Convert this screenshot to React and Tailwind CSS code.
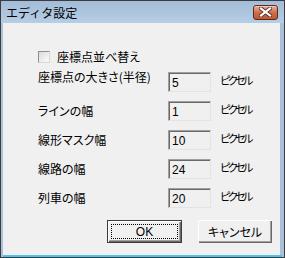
const rows = [
  { label: '座標点の大きさ(半径)', value: '5', high: true },
  { label: 'ラインの幅', value: '1' },
  { label: '線形マスク幅', value: '10' },
  { label: '線路の幅', value: '24' },
  { label: '列車の幅', value: '20' },
];

const CloseButton = () => (
  <div className="w-[25px] h-[15px] rounded-[3px] border border-[#5a2c20] bg-gradient-to-b from-[#e9b09b] via-[#cf6f4b] to-[#c0582f] flex items-center justify-center shadow-[inset_0_1px_0_#f3cbbb]">
    <svg width="13" height="10" viewBox="0 0 13 10">
      <path d="M2 1.5 L11 8.5 M11 1.5 L2 8.5" stroke="#5b3226" strokeWidth="4" strokeLinecap="square" />
      <path d="M2 1.5 L11 8.5 M11 1.5 L2 8.5" stroke="#ffffff" strokeWidth="2.2" strokeLinecap="square" />
    </svg>
  </div>
);

const App = () => {
  return (
    <div className="w-[285px] h-[258px] flex flex-col border border-[#3c3c3c] bg-[#a9c2dc] font-['Noto_Sans_CJK_JP',sans-serif] text-black overflow-hidden">
      {/* title bar */}
      <div className="h-[22px] flex items-center justify-between pl-[5px] pr-[6px] bg-gradient-to-b from-[#a3bcd7] to-[#b6cde6]">
        <span className="text-[12px] leading-[14px] mt-[1px]">エディタ設定</span>
        <CloseButton />
      </div>

      {/* client area */}
      <div className="flex-1 ml-[2px] mr-[4px] bg-[#f0f0f0] flex flex-col pt-[27px] pl-[35px] text-[12px] leading-[14px] [font-feature-settings:'palt']">
        <div className="h-[13px] flex items-center">
          <div className="w-[12px] h-[12px] border border-t-[#8e8f8f] border-l-[#8e8f8f] border-b-[#d8d8d8] border-r-[#d8d8d8] bg-gradient-to-br from-[#dcdcdc] to-[#fafafa]"></div>
          <span className="ml-[7px]">座標点並べ替え</span>
        </div>

        <div className="mt-[9px] flex flex-col gap-[9px]">
          {rows.map((r) => (
            <div key={r.label} className="h-[20px] flex items-center">
              <span className={`w-[130px] ${r.high ? 'mb-[10px]' : 'mb-[1px]'}`}>{r.label}</span>
              <div className="w-[43px] h-[20px] border border-t-[#a0a0a0] border-l-[#a0a0a0] border-b-[#e3e3e3] border-r-[#e3e3e3] shadow-[inset_1px_1px_0_#696969] bg-[#f0f0f0] flex items-center pl-[3px] pt-[2px] font-['Liberation_Sans',sans-serif]">
                {r.value}
              </div>
              <span className="ml-[9px] mb-[4px] text-[11px] tracking-[-2.5px]">ピクセル</span>
            </div>
          ))}
        </div>

        <div className="mt-[12px] mr-[8px] flex justify-end gap-[16px]">
          <button className="w-[75px] h-[23px] border border-[#3c3c3c] bg-[#f0f0f0] shadow-[inset_1px_1px_0_#ffffff,inset_-1px_-1px_0_#696969,inset_-2px_-2px_0_#a0a0a0] p-[3px] flex">
            <div className="flex-1 border border-dotted border-black flex items-center justify-center font-['Liberation_Sans',sans-serif]">
              OK
            </div>
          </button>
          <button className="w-[74px] h-[23px] bg-[#f0f0f0] shadow-[inset_1px_1px_0_#ffffff,inset_-1px_-1px_0_#696969,inset_-2px_-2px_0_#a0a0a0] flex items-center justify-center">
            キャンセル
          </button>
        </div>
      </div>
      <div className="h-[2px] mx-[2px] bg-[#4dc3ec]"></div>
    </div>
  );
};

export default App;
